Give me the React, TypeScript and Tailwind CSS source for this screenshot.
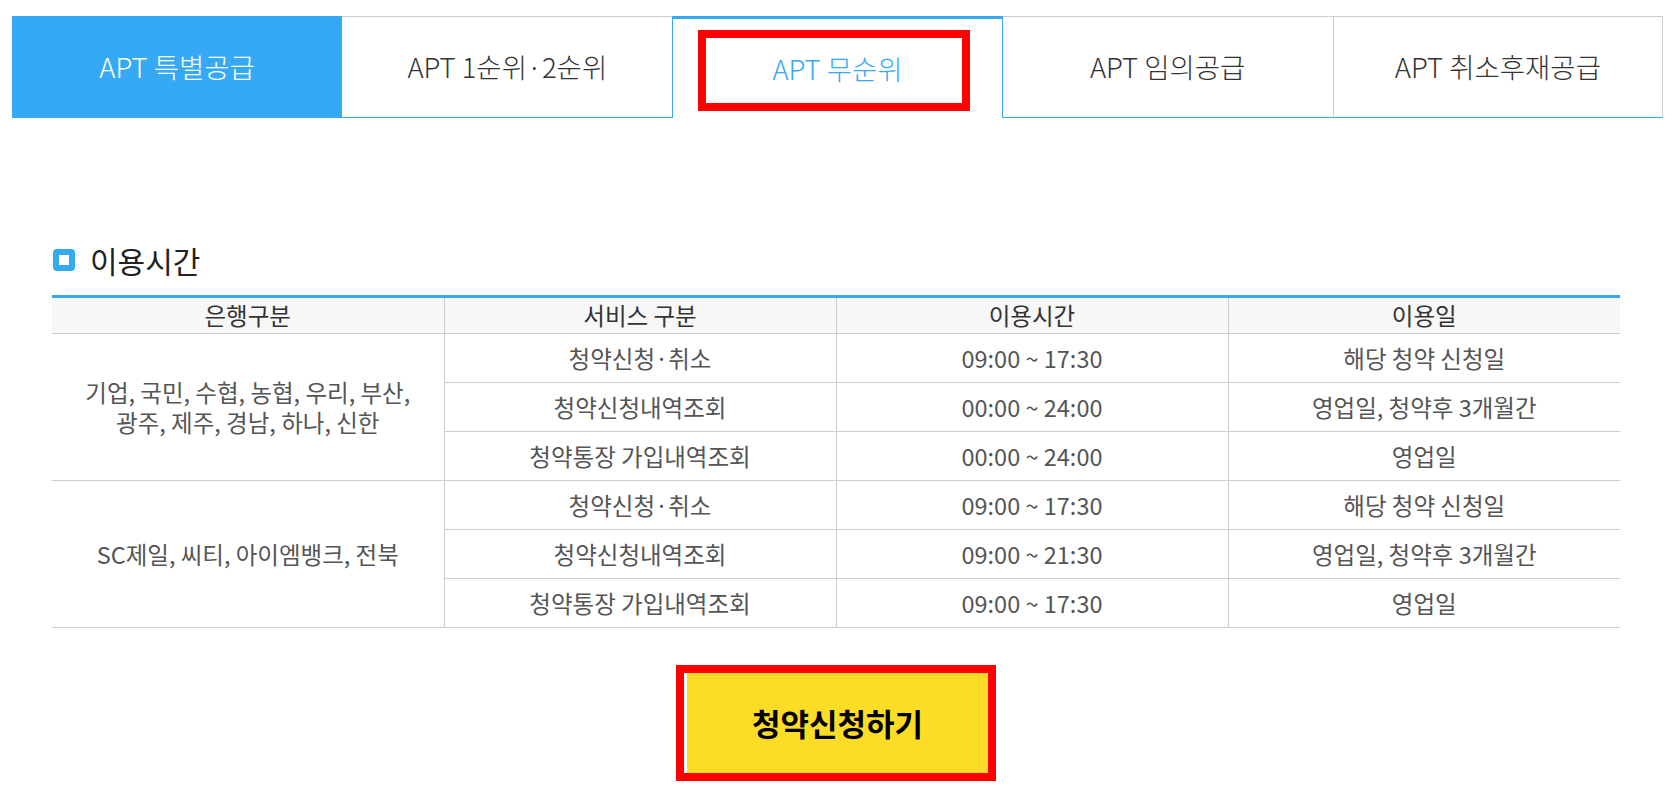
import React from "react";

type Row = { service: string; time: string; day: string };

const groups: { banks: string[]; rows: Row[] }[] = [
  {
    banks: ["기업, 국민, 수협, 농협, 우리, 부산,", "광주, 제주, 경남, 하나, 신한"],
    rows: [
      { service: "청약신청·취소", time: "09:00 ~ 17:30", day: "해당 청약 신청일" },
      { service: "청약신청내역조회", time: "00:00 ~ 24:00", day: "영업일, 청약후 3개월간" },
      { service: "청약통장 가입내역조회", time: "00:00 ~ 24:00", day: "영업일" },
    ],
  },
  {
    banks: ["SC제일, 씨티, 아이엠뱅크, 전북"],
    rows: [
      { service: "청약신청·취소", time: "09:00 ~ 17:30", day: "해당 청약 신청일" },
      { service: "청약신청내역조회", time: "09:00 ~ 21:30", day: "영업일, 청약후 3개월간" },
      { service: "청약통장 가입내역조회", time: "09:00 ~ 17:30", day: "영업일" },
    ],
  },
];

function Tabs() {
  return (
    <div className="grid grid-cols-5 h-[102px] text-[27.5px] font-light">
      <div className="flex items-center justify-center bg-[#36a9f5] text-white">
        APT 특별공급
      </div>
      <div className="flex items-center justify-center border-t border-[#cccccc] border-b border-b-[#36a9f5] text-[#333]">
        APT 1순위·2순위
      </div>
      <div className="relative flex items-center justify-center border-t-[3px] border-x border-[#36a9f5] text-[#36a9f5]">
        APT 무순위
        <div className="absolute left-[25px] right-[32px] top-[11px] bottom-[7px] border-[8px] border-[#ff0000]" />
      </div>
      <div className="flex items-center justify-center border-t border-[#cccccc] border-b border-b-[#36a9f5] text-[#333]">
        APT 임의공급
      </div>
      <div className="flex items-center justify-center border-t border-x border-[#cccccc] border-b border-b-[#36a9f5] text-[#333]">
        APT 취소후재공급
      </div>
    </div>
  );
}

export default function App() {
  return (
    <div className="w-[1675px] h-[788px] bg-white overflow-hidden font-['Noto_Sans_CJK_KR','Noto_Sans',sans-serif]">
      <div className="pt-[16px] px-[12px]">
        <Tabs />
      </div>

      <div className="pl-[53px] mt-[127px] flex items-center gap-[15px] h-[30px]">
        <span className="w-[22px] h-[22px] rounded-[4px] bg-[#36a9f5] flex items-center justify-center">
          <span className="w-[10px] h-[10px] bg-white" />
        </span>
        <h3 className="text-[30px] text-[#222] leading-none">이용시간</h3>
      </div>

      <div className="pl-[52px] mt-[20px]">
        <table className="w-[1568px] table-fixed border-collapse text-[23.5px] text-[#555]">
          <thead>
            <tr className="bg-[#f7f7f7] border-t-[3px] border-[#36a9f5] border-b border-b-[#cccccc]">
              {["은행구분", "서비스 구분", "이용시간", "이용일"].map((h, i) => (
                <th
                  key={h}
                  className={`h-[37px] font-normal text-[#333] ${i > 0 ? "border-l border-[#cccccc]" : ""}`}
                >
                  {h}
                </th>
              ))}
            </tr>
          </thead>
          <tbody>
            {groups.map((g, gi) =>
              g.rows.map((r, ri) => (
                <tr key={`${gi}-${ri}`} className="border-b border-[#cccccc]">
                  {ri === 0 && (
                    <td rowSpan={3} className="text-center leading-[30px]">
                      {g.banks.map((b) => (
                        <div key={b}>{b}</div>
                      ))}
                    </td>
                  )}
                  <td className="h-[49px] text-center border-l border-[#cccccc]">{r.service}</td>
                  <td className="text-center border-l border-[#cccccc]">{r.time}</td>
                  <td className="text-center border-l border-[#cccccc]">{r.day}</td>
                </tr>
              ))
            )}
          </tbody>
        </table>
      </div>

      <div className="mt-[45px] flex justify-center">
        <div className="relative">
          <button className="w-[301px] h-[100px] bg-[#fddc25] text-black text-[31px] font-bold">
            청약신청하기
          </button>
          <div className="absolute left-[-11px] right-[-8px] top-[-8px] bottom-[-8px] border-[8px] border-[#ff0000]" />
        </div>
      </div>
    </div>
  );
}
